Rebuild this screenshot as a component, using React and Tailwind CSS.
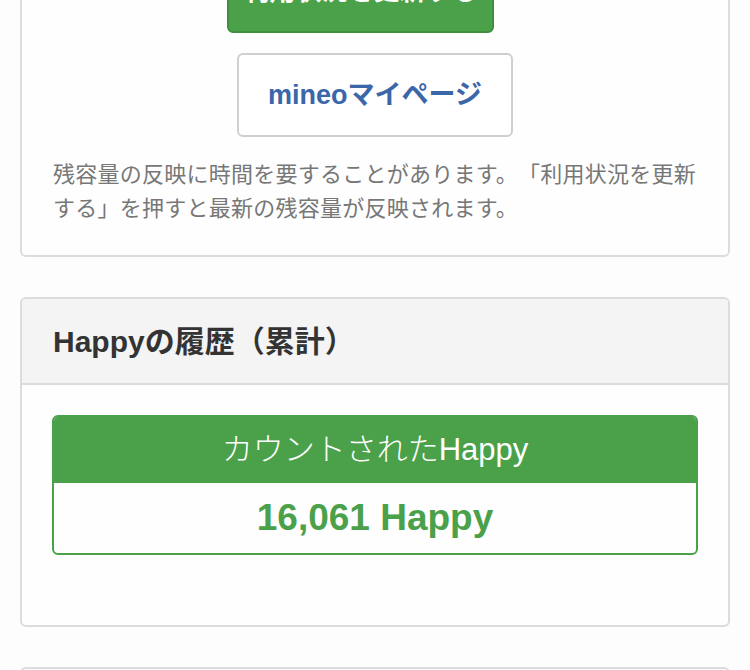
export default function App() {
  return (
    <div
      className="min-h-screen bg-[#fdfdfd] px-5 overflow-hidden h-[670px]"
      style={{ fontFamily: '"Liberation Sans", "Noto Sans CJK JP", sans-serif' }}
    >
      <div className="-mt-[53px] flex flex-col gap-10">
        <section className="bg-[#fefefe] border-2 border-[#dcdcdc] rounded-md px-[31px] pb-[29px]">
          <div className="flex flex-col">
            <button className="self-start ml-[174px] w-[267px] h-[84px] rounded-md bg-[#4aa14a] border-2 border-[#3f8f3f] text-white text-[26px] font-bold">
              利用状況を更新する
            </button>
            <button className="self-center mt-5 w-[276px] h-[84px] rounded-md bg-white border-2 border-[#cfcfcf] text-[#3b66a9] text-[27px] font-bold">
              mineoマイページ
            </button>
            <p className="mt-[21px] text-[22px] leading-[34px] tracking-[0.25px] text-[#777] [text-spacing-trim:space-all]">
              残容量の反映に時間を要することがあります。「利用状況を更新する」を押すと最新の残容量が反映されます。
            </p>
          </div>
        </section>

        <section className="bg-[#fefefe] border-2 border-[#dcdcdc] rounded-md overflow-hidden">
          <div className="bg-[#f4f4f4] border-b-2 border-[#dcdcdc] h-[86px] flex items-center px-[31px]">
            <h2 className="text-[30px] font-bold text-[#333] [text-spacing-trim:space-all]">Happyの履歴（累計）</h2>
          </div>
          <div className="px-[30px] pt-[30px] pb-[70px]">
            <div className="border-2 border-[#4aa14a] rounded-md overflow-hidden">
              <div className="bg-[#4aa14a] h-[66px] flex items-center justify-center text-white text-[31px] font-light">
                カウントされたHappy
              </div>
              <div className="h-[70px] flex items-center justify-center text-[#4aa14a] text-[37px] font-bold">
                16,061 Happy
              </div>
            </div>
          </div>
        </section>

        <section className="bg-[#fefefe] border-2 border-[#dcdcdc] rounded-md h-[100px]" />
      </div>
    </div>
  );
}
